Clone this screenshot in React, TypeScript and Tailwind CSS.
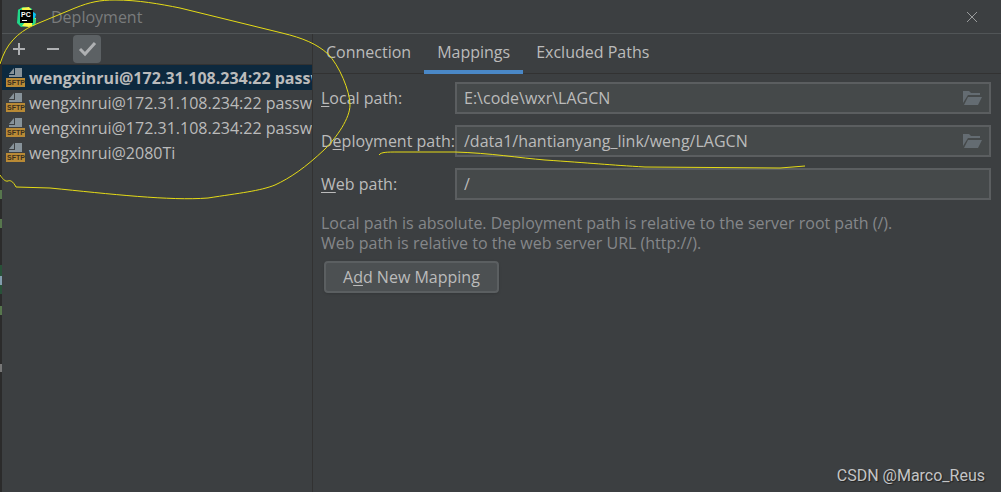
/**
 * Deployment dialog - server list on the left, path mappings on the right.
 */
import { ReactNode } from 'react';

interface Server {
  id: number;
  name: string;
  selected?: boolean;
}

interface PathField {
  id: string;
  label: ReactNode;
  value: string;
  browsable: boolean;
}

const servers: Server[] = [
  { id: 1, name: 'wengxinrui@172.31.108.234:22 password', selected: true },
  { id: 2, name: 'wengxinrui@172.31.108.234:22 password' },
  { id: 3, name: 'wengxinrui@172.31.108.234:22 password' },
  { id: 4, name: 'wengxinrui@2080Ti' },
];

const tabs = ['Connection', 'Mappings', 'Excluded Paths'];

const fields: PathField[] = [
  { id: 'local-path', label: <><Mnemonic>L</Mnemonic>ocal path:</>, value: 'E:\\code\\wxr\\LAGCN', browsable: true },
  {
    id: 'deployment-path',
    label: <>D<Mnemonic>e</Mnemonic>ployment path:</>,
    value: '/data1/hantianyang_link/weng/LAGCN',
    browsable: true,
  },
  { id: 'web-path', label: <><Mnemonic>W</Mnemonic>eb path:</>, value: '/', browsable: false },
];

// Underlined keyboard shortcut letter
function Mnemonic({ children }: { children: ReactNode }) {
  return <span className="underline decoration-1 underline-offset-2">{children}</span>;
}

function AppLogo() {
  return (
    <svg className="h-5 w-5" viewBox="0 0 20 20" aria-hidden="true">
      <path fill="#21d789" d="M1 3 6 0l8 1 2 3-4 15-8 1-4-4z" />
      <path fill="#fcf84a" d="M4 1 12 0l3 4-9 1zM12 10l7 1-1 7-6 2-7-1z" />
      <path fill="#21d789" d="M1 3 5 1l1 17-5-2zM15 10l4 2-1 6-3 1z" />
      <path fill="#07c3f2" d="M15 4l4 3-1 4-3 1z" />
      <path fill="#000" d="M3 3h13v13H3z" />
      <text x="4" y="10" fill="#fff" fontSize="7" fontWeight="700" fontFamily="Liberation Sans, sans-serif">
        PC
      </text>
      <path fill="#fff" d="M5 13h5v1H5z" />
    </svg>
  );
}

function SftpIcon() {
  return (
    <svg className="h-5 w-5 shrink-0" viewBox="0 0 20 20" aria-hidden="true">
      <path fill="#87939a" d="M9 0h7v9H3V7h6z" />
      <path fill="#87939a" d="M8 0v6H3z" />
      <path fill="#b98a35" d="M0 10h19v9H0z" />
      <text
        x="1"
        y="17"
        fill="#3a3020"
        fontSize="7"
        fontWeight="700"
        fontFamily="Liberation Sans, sans-serif"
      >
        SFTP
      </text>
    </svg>
  );
}

function FolderIcon() {
  return (
    <svg className="h-4 w-5" viewBox="0 0 20 16" fill="#646c72" aria-hidden="true">
      <path d="M0 13V1h6l2 2h9v2H5z" />
      <path d="M5 7h14l-4 8H1z" />
    </svg>
  );
}

function TitleBar() {
  return (
    <header className="flex h-[34px] items-center border-b border-[#515557] pr-[19px] pl-[15px]">
      <AppLogo />
      <h1 className="ml-[14px] flex-1 text-[#797b7c]">Deployment</h1>
      <button type="button" aria-label="Close" className="text-[#999b9c]">
        <svg className="h-5 w-5" viewBox="0 0 20 20" fill="none" stroke="currentColor">
          <path d="M5 5l10 10M15 5 5 15" />
        </svg>
      </button>
    </header>
  );
}

function ServerPanel() {
  return (
    <aside className="w-[311px] shrink-0 border-r border-[#323232]">
      <div className="flex h-[31px] items-center gap-[6px] border-b border-[#323232] pl-[3px]">
        <button type="button" aria-label="Add server" className="flex h-7 w-7 items-center justify-center">
          <svg className="h-4 w-4" viewBox="0 0 16 16" fill="#afb1b3">
            <path d="M7 2h2v5h5v2H9v5H7V9H2V7h5z" />
          </svg>
        </button>
        <button type="button" aria-label="Remove server" className="flex h-7 w-7 items-center justify-center">
          <svg className="h-4 w-4" viewBox="0 0 16 16" fill="#afb1b3">
            <path d="M2 7h12v2H2z" />
          </svg>
        </button>
        <button
          type="button"
          aria-label="Use as default"
          className="flex h-7 w-7 items-center justify-center rounded bg-[#5c6164]"
        >
          <svg className="h-5 w-5" viewBox="0 0 20 20" fill="none" stroke="#afb1b3" strokeWidth="3">
            <path d="M3 10l5 5L18 4" />
          </svg>
        </button>
      </div>
      <ul>
        {servers.map((server) => (
          <li
            key={server.id}
            className={`flex h-[25px] items-center gap-[3px] overflow-hidden pt-px pl-1 whitespace-nowrap ${
              server.selected ? 'bg-[#0d293e] font-bold' : ''
            }`}
          >
            <SftpIcon />
            <span>{server.name}</span>
          </li>
        ))}
      </ul>
    </aside>
  );
}

function MappingsPanel() {
  return (
    <main className="min-w-0 flex-1">
      <nav className="flex h-10 border-b border-[#323232]" role="tablist">
        {tabs.map((tab) => (
          <button
            key={tab}
            type="button"
            role="tab"
            aria-selected={tab === 'Mappings'}
            className={`h-10 border-b-4 px-[13px] ${
              tab === 'Mappings' ? 'border-[#4a88c7]' : 'border-transparent'
            }`}
          >
            {tab}
          </button>
        ))}
      </nav>

      <div className="pt-2 pr-[10px] pl-2">
        <form className="flex flex-col gap-[11px]">
          {fields.map((field) => (
            <div key={field.id} className="flex items-center">
              <label htmlFor={field.id} className="w-[134px] shrink-0 whitespace-nowrap">
                {field.label}
              </label>
              <div className="flex h-8 flex-1 items-center border-2 border-[#5b5e60] bg-[#45494a] pr-[6px] pl-[7px]">
                <input
                  id={field.id}
                  type="text"
                  defaultValue={field.value}
                  className="min-w-0 flex-1 bg-transparent outline-none"
                />
                {field.browsable && (
                  <button type="button" aria-label="Browse">
                    <FolderIcon />
                  </button>
                )}
              </div>
            </div>
          ))}
        </form>

        <p className="mt-[13px] leading-5 text-[#85878a]">
          Local path is absolute. Deployment path is relative to the server root path (/).
          <br />
          Web path is relative to the web server URL (http://).
        </p>

        <button
          type="button"
          className="mt-2 ml-[3px] h-8 rounded border-2 border-[#5b5f61] bg-[#4c5052] px-[17px] shadow-sm"
        >
          A<Mnemonic>d</Mnemonic>d New Mapping
        </button>
      </div>
    </main>
  );
}

// Pen strokes drawn over the dialog
function Annotations() {
  return (
    <svg
      className="pointer-events-none absolute top-0 left-0 h-[492px] w-[1001px]"
      viewBox="0 0 1001 492"
      fill="none"
      stroke="#e5db16"
      aria-hidden="true"
    >
      <path d="M0 64C6 44 17 33 34 25L75 8C90 2 100 0 115 0C138 0 160 4 180 8L282 33C303 38 317 44 328 54C339 65 350 91 350 105C350 118 337 137 325 149C305 168 290 178 275 185C260 191 240 193 208 198C170 201 110 194 50 188L16 187C13 181 10 180 8 181C5 182 2 178 0 175" />
      <path d="M379 155C381 152 387 152 398 152L455 152C490 153 520 158 545 160C590 163 610 165 645 167L780 168L805 166" />
    </svg>
  );
}

// Sliver of the editor window showing beside the dialog
function EditorEdge() {
  return (
    <div className="flex w-[2px] shrink-0 flex-col bg-[#2b2b2b]">
      <div className="mt-[190px] h-[9px] bg-[#57774d]" />
      <div className="mt-5 h-[9px] bg-[#57774d]" />
      <div className="mt-[37px] h-[11px] bg-[#295239]" />
      <div className="h-[9px] bg-[#829dad]" />
      <div className="h-[9px] bg-[#295239]" />
      <div className="mt-3 h-[9px] bg-[#57774d]" />
      <div className="mt-[49px] h-[8px] bg-[#777777]" />
    </div>
  );
}

export default function App() {
  return (
    <div className="relative flex min-h-screen overflow-hidden bg-[#3c3f41] font-['Open_Sans','Noto_Sans',sans-serif] text-base text-[#bbbbbb]">
      <EditorEdge />
      <div className="flex min-w-0 flex-1 flex-col">
        <TitleBar />
        <div className="flex flex-1">
          <ServerPanel />
          <MappingsPanel />
        </div>
      </div>
      <Annotations />
      <div className="absolute right-4 bottom-1 font-['Roboto',sans-serif] text-base text-[#c4c5c6] [text-shadow:1px_1px_1px_#222]">
        CSDN @Marco_Reus
      </div>
    </div>
  );
}
